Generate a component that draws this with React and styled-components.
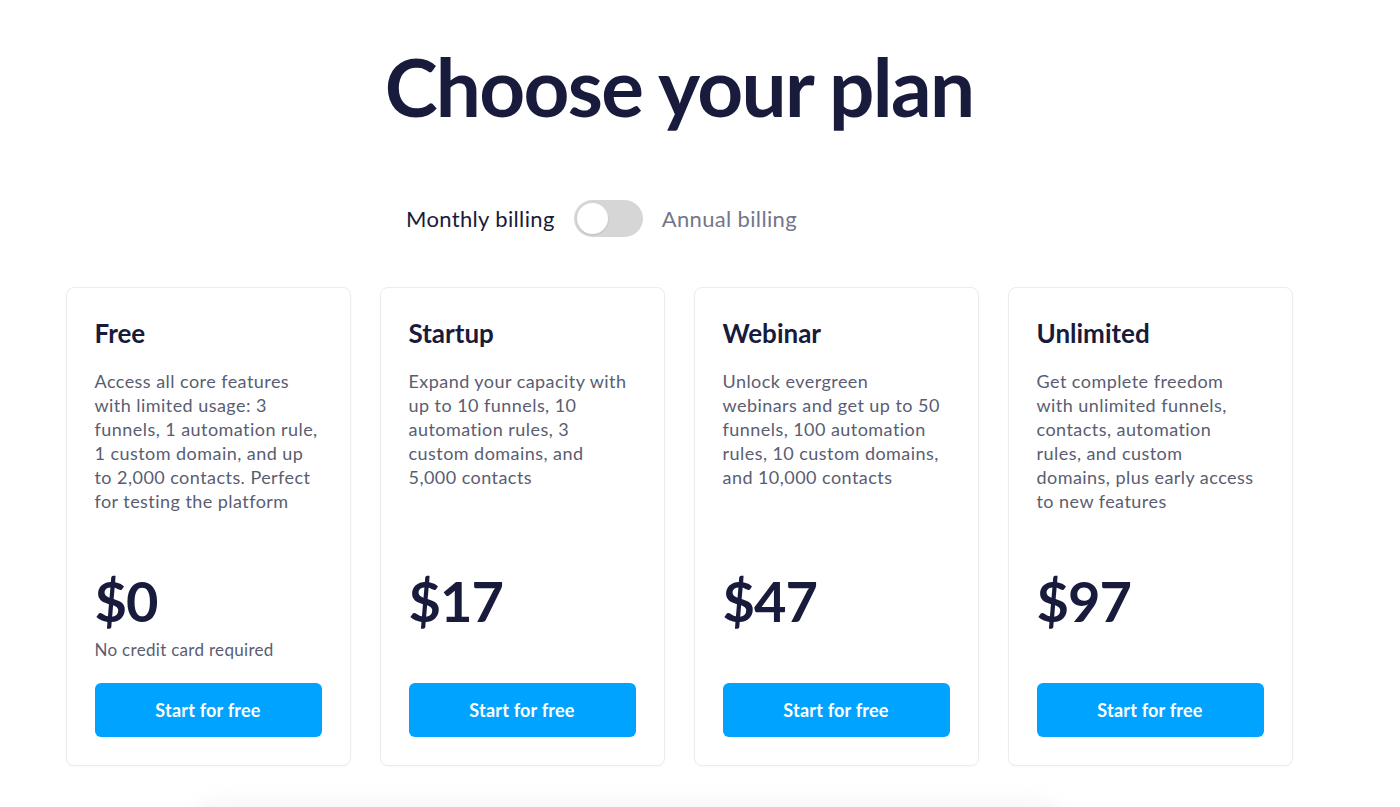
import React from "react";
import styled, { createGlobalStyle } from "styled-components";

const Global = createGlobalStyle`
  html, body { margin: 0; padding: 0; background: #ffffff; }
  body { font-family: Lato, "Noto Sans", sans-serif; -webkit-font-smoothing: antialiased; }
  * { box-sizing: border-box; }
`;

const Page = styled.main`
  width: 1358px;
  display: flex;
  flex-direction: column;
  align-items: center;
  overflow: hidden;
  height: 807px;
`;

const Title = styled.h1`
  margin: 38px 0 0;
  font-size: 80px;
  line-height: 96px;
  font-weight: 700;
  color: #181b3b;
  letter-spacing: -1.7px;
`;

const ToggleRow = styled.div`
  margin-top: 66px;
  display: flex;
  align-items: center;
  gap: 19px;
  padding-right: 155px;
`;

const BillingLabel = styled.span`
  font-size: 22px;
  line-height: 28px;
  letter-spacing: 0.35px;
  color: ${(p) => (p.$active ? "#181b3b" : "#74768a")};
`;

const Switch = styled.div`
  width: 69px;
  height: 37px;
  border-radius: 19px;
  background: #d6d6d6;
  padding: 3px;
  display: flex;
  align-items: center;
`;

const Knob = styled.div`
  width: 31px;
  height: 31px;
  border-radius: 50%;
  background: #ffffff;
  box-shadow: 0 1px 2px rgba(0, 0, 0, 0.12);
`;

const Grid = styled.div`
  margin-top: 50px;
  display: grid;
  grid-template-columns: repeat(4, 285px);
  gap: 29px;
`;

const Card = styled.section`
  height: 479px;
  border: 1px solid #ececef;
  border-radius: 8px;
  padding: 29px 28px 28px;
  display: flex;
  flex-direction: column;
  background: #fff;
  box-shadow: 0 1px 2px rgba(20, 20, 40, 0.03);
`;

const PlanName = styled.h2`
  margin: 0;
  font-size: 26px;
  line-height: 32px;
  font-weight: 700;
  color: #181b3b;
`;

const Desc = styled.p`
  margin: 20px 0 0;
  font-size: 18px;
  line-height: 24px;
  letter-spacing: 0.45px;
  color: #5a5d72;
  flex: 1;
`;

const Line = styled.span`
  display: block;
  white-space: nowrap;
`;

const Price = styled.div`
  font-size: 56px;
  line-height: 56px;
  font-weight: 700;
  color: #181b3b;
  letter-spacing: -1px;
`;

const Note = styled.div`
  margin-top: 9px;
  min-height: 24px;
  font-size: 17px;
  line-height: 24px;
  letter-spacing: 0.3px;
  color: #5a5d72;
`;

const Button = styled.button`
  margin-top: 21px;
  height: 54px;
  width: 100%;
  border: none;
  border-radius: 6px;
  background: #00a3ff;
  color: #ffffff;
  font-family: inherit;
  font-size: 18px;
  font-weight: 700;
  letter-spacing: 0.2px;
  cursor: pointer;
`;

const Fade = styled.div`
  margin-top: 30px;
  margin-right: 102px;
  width: 860px;
  height: 60px;
  flex-shrink: 0;
  background: linear-gradient(#fcfcfc, #f2f2f2 40%);
  border-radius: 20px;
  filter: blur(8px);
`;

const plans = [
  {
    name: "Free",
    desc: [
      "Access all core features",
      "with limited usage: 3",
      "funnels, 1 automation rule,",
      "1 custom domain, and up",
      "to 2,000 contacts. Perfect",
      "for testing the platform",
    ],
    price: "$0",
    note: "No credit card required",
  },
  {
    name: "Startup",
    desc: [
      "Expand your capacity with",
      "up to 10 funnels, 10",
      "automation rules, 3",
      "custom domains, and",
      "5,000 contacts",
    ],
    price: "$17",
  },
  {
    name: "Webinar",
    desc: [
      "Unlock evergreen",
      "webinars and get up to 50",
      "funnels, 100 automation",
      "rules, 10 custom domains,",
      "and 10,000 contacts",
    ],
    price: "$47",
  },
  {
    name: "Unlimited",
    desc: [
      "Get complete freedom",
      "with unlimited funnels,",
      "contacts, automation",
      "rules, and custom",
      "domains, plus early access",
      "to new features",
    ],
    price: "$97",
  },
];

export default function App() {
  return (
    <>
      <Global />
      <Page>
        <Title>Choose your plan</Title>
        <ToggleRow>
          <BillingLabel $active>Monthly billing</BillingLabel>
          <Switch role="switch" aria-checked="false">
            <Knob />
          </Switch>
          <BillingLabel>Annual billing</BillingLabel>
        </ToggleRow>
        <Grid>
          {plans.map((p) => (
            <Card key={p.name}>
              <PlanName>{p.name}</PlanName>
              <Desc>
                {p.desc.map((l, i) => (
                  <Line key={i}>{l}</Line>
                ))}
              </Desc>
              <Price>{p.price}</Price>
              <Note>{p.note || ""}</Note>
              <Button>Start for free</Button>
            </Card>
          ))}
        </Grid>
        <Fade />
      </Page>
    </>
  );
}
